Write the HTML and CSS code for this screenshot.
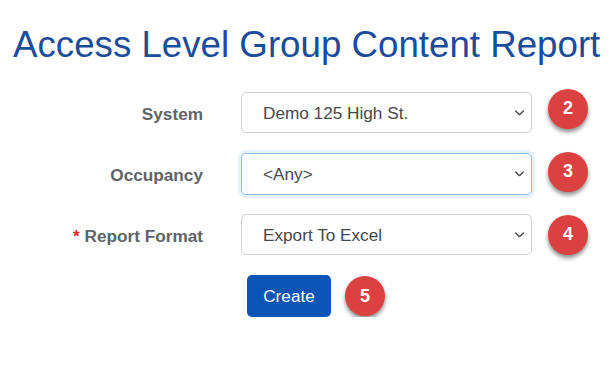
FILE: index.html
```html
<!DOCTYPE html>
<html>
<head>
<meta charset="utf-8">
<link rel="stylesheet" href="styles.css">
</head>
<body>
<main class="page">
  <h1 class="title">Access Level Group Content Report</h1>
  <form class="form">
    <div class="row">
      <label class="label">System</label>
      <div class="select"><span class="val">Demo 125 High St.</span><svg class="chev" viewBox="0 0 12 8"><path d="M1.8 1.8 L6 5.8 L10.2 1.8" fill="none" stroke="#444" stroke-width="1.5" stroke-linecap="round" stroke-linejoin="round"/></svg></div>
      <span class="badge b-up">2</span>
    </div>
    <div class="row">
      <label class="label">Occupancy</label>
      <div class="select focus"><span class="val">&lt;Any&gt;</span><svg class="chev" viewBox="0 0 12 8"><path d="M1.8 1.8 L6 5.8 L10.2 1.8" fill="none" stroke="#444" stroke-width="1.5" stroke-linecap="round" stroke-linejoin="round"/></svg></div>
      <span class="badge b-up2">3</span>
    </div>
    <div class="row">
      <label class="label"><span class="req">*</span> Report Format</label>
      <div class="select"><span class="val">Export To Excel</span><svg class="chev" viewBox="0 0 12 8"><path d="M1.8 1.8 L6 5.8 L10.2 1.8" fill="none" stroke="#444" stroke-width="1.5" stroke-linecap="round" stroke-linejoin="round"/></svg></div>
      <span class="badge">4</span>
    </div>
    <div class="actions">
      <button type="button" class="btn">Create</button>
      <span class="badge">5</span>
    </div>
  </form>
</main>
</body>
</html>
```

FILE: styles.css
```css
html, body {
  margin: 0;
  padding: 0;
  background: #ffffff;
}
body {
  font-family: "Liberation Sans", Arial, sans-serif;
}
.page {
  padding-top: 26px;
}
.title {
  margin: 0 0 29px 13px;
  font-size: 36.7px;
  line-height: 37px;
  font-weight: normal;
  color: #1a4c9b;
  white-space: nowrap;
}
.form {
  display: flex;
  flex-direction: column;
  gap: 20px;
}
.row {
  display: flex;
  align-items: center;
  height: 41px;
}
.label {
  width: 203px;
  margin-right: 38px;
  padding-top: 3px;
  text-align: right;
  font-size: 17.2px;
  font-weight: bold;
  color: #5e6467;
}
.req {
  color: #e8262a;
}
.select {
  box-sizing: border-box;
  width: 291px;
  height: 41px;
  border: 1px solid #cfd2d5;
  border-radius: 5px;
  display: flex;
  align-items: center;
  justify-content: space-between;
  padding: 0 6px 0 21px;
  font-size: 17.2px;
  color: #45494d;
  background: #fff;
}
.val {
  padding-top: 2px;
}
.select.focus {
  height: 42px;
  border-color: #8cbcec;
  box-shadow: 0 0 0 3px rgba(120, 175, 235, 0.18);
}
.chev {
  width: 11px;
  height: 8px;
}
.badge {
  width: 40px;
  height: 40px;
  margin-left: 16px;
  border-radius: 50%;
  background: #dc4141;
  color: #ffffff;
  font-size: 18px;
  font-weight: bold;
  display: flex;
  align-items: center;
  justify-content: center;
  box-shadow: 0 3px 4px rgba(0, 0, 0, 0.45);
}
.b-up {
  margin-top: -8px;
}
.b-up2 {
  margin-top: -4px;
}
.actions {
  display: flex;
  align-items: center;
  padding-left: 247px;
}
.btn {
  width: 84px;
  height: 42px;
  border: none;
  border-radius: 5px;
  background: #0b55b7;
  color: #ffffff;
  font-family: "Liberation Sans", Arial, sans-serif;
  font-size: 17.2px;
  padding: 0;
}
.actions .badge {
  margin-left: 14px;
}
```
